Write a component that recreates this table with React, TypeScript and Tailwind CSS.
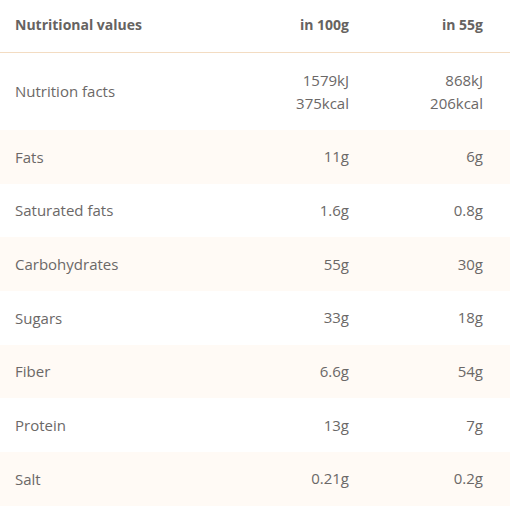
import React from "react";

const rows: { label: string; a: string[]; b: string[] }[] = [
  { label: "Nutrition facts", a: ["1579kJ", "375kcal"], b: ["868kJ", "206kcal"] },
  { label: "Fats", a: ["11g"], b: ["6g"] },
  { label: "Saturated fats", a: ["1.6g"], b: ["0.8g"] },
  { label: "Carbohydrates", a: ["55g"], b: ["30g"] },
  { label: "Sugars", a: ["33g"], b: ["18g"] },
  { label: "Fiber", a: ["6.6g"], b: ["54g"] },
  { label: "Protein", a: ["13g"], b: ["7g"] },
  { label: "Salt", a: ["0.21g"], b: ["0.2g"] },
];

export default function App() {
  return (
    <div
      className="w-[510px] h-[511px] bg-white text-[#6b6867] text-[15px]"
      style={{ fontFamily: '"Open Sans", sans-serif' }}
    >
      <div className="grid grid-cols-[1fr_134px_134px] items-center h-[53px] pb-[3px] pl-[15px] pr-[27px] border-b border-[#f3dcc2] font-bold text-[14px] text-[#666361]">
        <div>Nutritional values</div>
        <div className="text-right">in 100g</div>
        <div className="text-right">in 55g</div>
      </div>
      {rows.map((r, i) => (
        <div
          key={r.label}
          className={`grid grid-cols-[1fr_134px_134px] items-center pl-[15px] pr-[27px] ${
            i === 0 ? "h-[77px]" : "h-[53.7px]"
          } ${i % 2 === 1 ? "bg-[#fffaf5]" : "bg-white"}`}
        >
          <div>{r.label}</div>
          <div className="text-right leading-[23px]">
            {r.a.map((t) => (
              <div key={t}>{t}</div>
            ))}
          </div>
          <div className="text-right leading-[23px]">
            {r.b.map((t) => (
              <div key={t}>{t}</div>
            ))}
          </div>
        </div>
      ))}
    </div>
  );
}
